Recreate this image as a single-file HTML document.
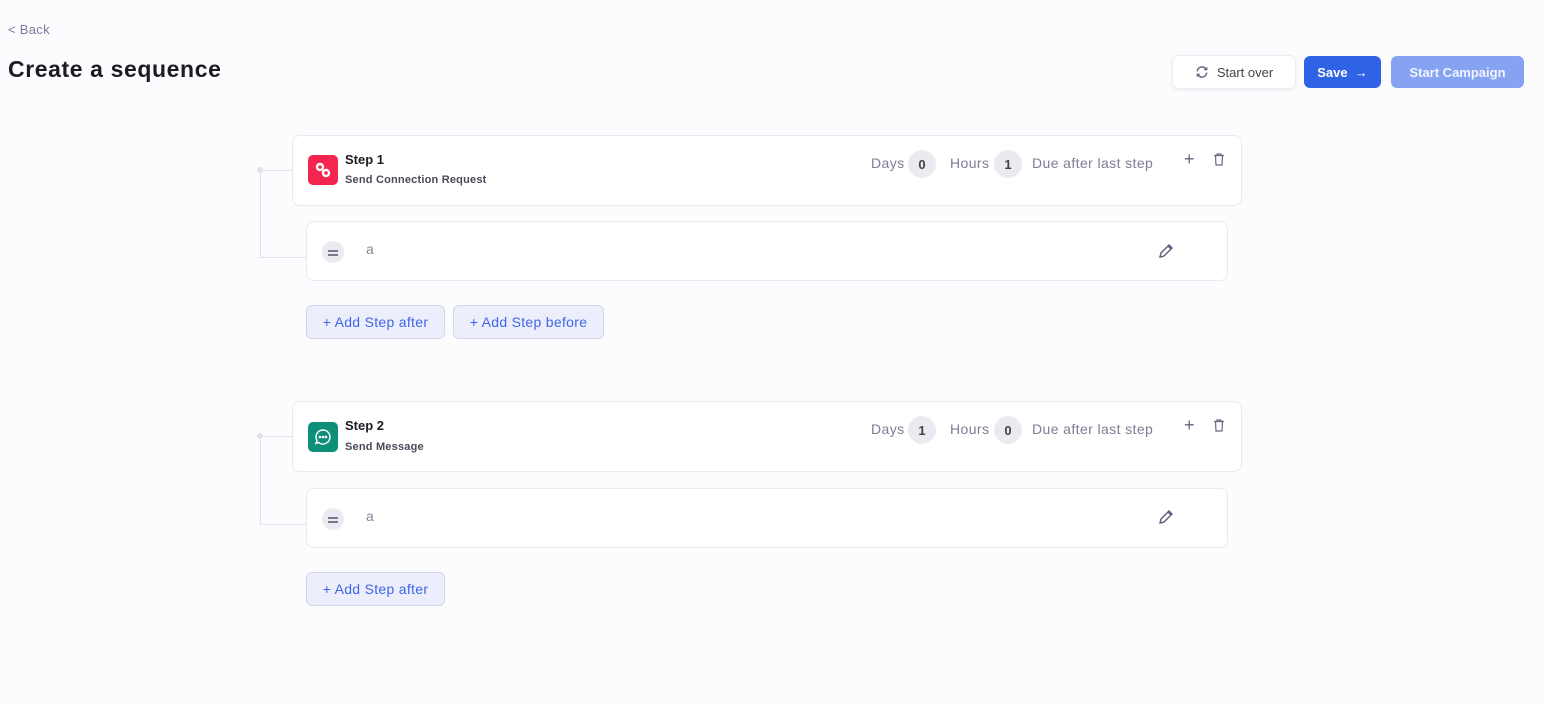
<!DOCTYPE html>
<html><head><style>
*{box-sizing:border-box;margin:0;padding:0}
body{width:1545px;height:705px;background:#fcfbfd;font-family:"Liberation Sans",sans-serif;position:relative;overflow:hidden}
.a{position:absolute}
.card{position:absolute;background:#fff;border:1px solid #ebe9ef;border-radius:8px}
.btn{position:absolute;border-radius:6px;font-size:14px;display:flex;align-items:center;justify-content:center}
.add{position:absolute;height:34px;background:#eceefb;border:1px solid #d3d6ea;border-radius:6px;color:#3f66e8;font-size:14px;letter-spacing:.3px;display:flex;align-items:center;justify-content:center}
.pill{position:absolute;width:28px;height:28px;border-radius:50%;background:#ebeaf0;color:#444;font-size:13px;font-weight:bold;display:flex;align-items:center;justify-content:center}
.lbl{position:absolute;color:#7f7c93;font-size:14px;letter-spacing:.4px}
.ln{position:absolute;background:#e2e0e8}
.sub{position:absolute;left:345px;font-size:11px;font-weight:bold;color:#4a4a58;letter-spacing:.2px}
</style></head><body>
<div class="a" style="left:8px;top:22px;color:#7d79a0;font-size:13px;letter-spacing:.3px">&lt; Back</div>
<div class="a" style="left:8px;top:56px;color:#1c1b22;font-size:23px;font-weight:bold;letter-spacing:.6px">Create a sequence</div>

<div class="btn" style="left:1172px;top:55px;width:124px;height:34px;background:#fff;border:1px solid #eeedf2;box-shadow:0 1px 3px rgba(0,0,0,.06);color:#444;font-size:13px">
<svg width="14" height="14" viewBox="0 0 24 24" fill="none" stroke="#6a6680" stroke-width="2.5" style="margin-right:8px"><path d="M4 11a8 8 0 0 1 14-5l2 2M20 4v4h-4M20 13a8 8 0 0 1-14 5l-2-2M4 20v-4h4"/></svg>Start over</div>
<div class="btn" style="left:1304px;top:56px;width:77px;height:32px;background:#3062e6;color:#fff;font-size:13px;font-weight:bold">Save &nbsp;→</div>
<div class="btn" style="left:1391px;top:56px;width:133px;height:32px;background:#86a2f2;color:#f2f5ff;font-size:13px;font-weight:bold">Start Campaign</div>

<!-- step 1 -->
<div class="ln" style="left:257px;top:167px;width:6px;height:6px;border-radius:50%"></div>
<div class="ln" style="left:260px;top:170px;width:32px;height:1px"></div>
<div class="ln" style="left:260px;top:170px;width:1px;height:88px"></div>
<div class="ln" style="left:260px;top:257px;width:46px;height:1px"></div>
<div class="card" style="left:292px;top:135px;width:950px;height:71px"></div>
<div class="a" style="left:308px;top:155px;width:30px;height:30px;border-radius:5px;background:#f4254f;display:flex;align-items:center;justify-content:center">
<svg width="18" height="18" viewBox="0 0 18 18" fill="none" stroke="#fff" stroke-width="2.4"><circle cx="6" cy="6" r="3"/><circle cx="12" cy="12" r="3"/></svg></div>
<div class="a" style="left:345px;top:152px;font-size:13px;font-weight:bold;color:#1c1b22">Step 1</div>
<div class="sub" style="top:174px">Send Connection Request</div>
<div class="lbl" style="left:871px;top:155px">Days</div><div class="pill" style="left:908px;top:150px">0</div>
<div class="lbl" style="left:950px;top:155px">Hours</div><div class="pill" style="left:994px;top:150px">1</div>
<div class="lbl" style="left:1032px;top:155px">Due after last step</div>
<div class="a" style="left:1184px;top:149px;color:#6a6680;font-size:18px">+</div>
<svg class="a" style="left:1213px;top:153px" width="12" height="13" viewBox="0 0 12 13" fill="none" stroke="#6a6680" stroke-width="1.2"><path d="M1 2.5h10M4 2.5V1h4v1.5M2.5 2.5l.5 9.5h6l.5-9.5"/></svg>

<div class="card" style="left:306px;top:221px;width:922px;height:60px"></div>
<div class="a" style="left:322px;top:241px;width:22px;height:22px;border-radius:50%;background:#ebeaf0"></div>
<div class="a" style="left:328px;top:250px;width:10px;height:1.5px;background:#7a778c"></div>
<div class="a" style="left:328px;top:254px;width:10px;height:1.5px;background:#7a778c"></div>
<div class="a" style="left:366px;top:241px;color:#8a879a;font-size:14px">a</div>
<svg class="a" style="left:1158px;top:243px" width="16" height="16" viewBox="0 0 16 16" fill="none" stroke="#5e5a7a" stroke-width="1.4"><path d="M2 14l1-4 8-8 3 3-8 8zM10 3l3 3"/></svg>
<div class="add" style="left:306px;top:305px;width:139px">+ Add Step after</div>
<div class="add" style="left:453px;top:305px;width:151px">+ Add Step before</div>

<!-- step 2 -->
<div class="ln" style="left:257px;top:433px;width:6px;height:6px;border-radius:50%"></div>
<div class="ln" style="left:260px;top:436px;width:32px;height:1px"></div>
<div class="ln" style="left:260px;top:436px;width:1px;height:89px"></div>
<div class="ln" style="left:260px;top:524px;width:46px;height:1px"></div>
<div class="card" style="left:292px;top:401px;width:950px;height:71px"></div>
<div class="a" style="left:308px;top:422px;width:30px;height:30px;border-radius:5px;background:#0e8f7a;display:flex;align-items:center;justify-content:center">
<svg width="18" height="18" viewBox="0 0 18 18" fill="none" stroke="#fff" stroke-width="1.4"><path d="M9 2a7 7 0 1 1-4.5 12.4L2 15.5l1-3A7 7 0 0 1 9 2z"/><circle cx="6" cy="9" r=".6" fill="#fff"/><circle cx="9" cy="9" r=".6" fill="#fff"/><circle cx="12" cy="9" r=".6" fill="#fff"/></svg></div>
<div class="a" style="left:345px;top:418px;font-size:13px;font-weight:bold;color:#1c1b22">Step 2</div>
<div class="sub" style="top:441px">Send Message</div>
<div class="lbl" style="left:871px;top:421px">Days</div><div class="pill" style="left:908px;top:416px">1</div>
<div class="lbl" style="left:950px;top:421px">Hours</div><div class="pill" style="left:994px;top:416px">0</div>
<div class="lbl" style="left:1032px;top:421px">Due after last step</div>
<div class="a" style="left:1184px;top:415px;color:#6a6680;font-size:18px">+</div>
<svg class="a" style="left:1213px;top:419px" width="12" height="13" viewBox="0 0 12 13" fill="none" stroke="#6a6680" stroke-width="1.2"><path d="M1 2.5h10M4 2.5V1h4v1.5M2.5 2.5l.5 9.5h6l.5-9.5"/></svg>

<div class="card" style="left:306px;top:488px;width:922px;height:60px"></div>
<div class="a" style="left:322px;top:508px;width:22px;height:22px;border-radius:50%;background:#ebeaf0"></div>
<div class="a" style="left:328px;top:517px;width:10px;height:1.5px;background:#7a778c"></div>
<div class="a" style="left:328px;top:521px;width:10px;height:1.5px;background:#7a778c"></div>
<div class="a" style="left:366px;top:508px;color:#8a879a;font-size:14px">a</div>
<svg class="a" style="left:1158px;top:509px" width="16" height="16" viewBox="0 0 16 16" fill="none" stroke="#5e5a7a" stroke-width="1.4"><path d="M2 14l1-4 8-8 3 3-8 8zM10 3l3 3"/></svg>
<div class="add" style="left:306px;top:572px;width:139px">+ Add Step after</div>
</body></html>
